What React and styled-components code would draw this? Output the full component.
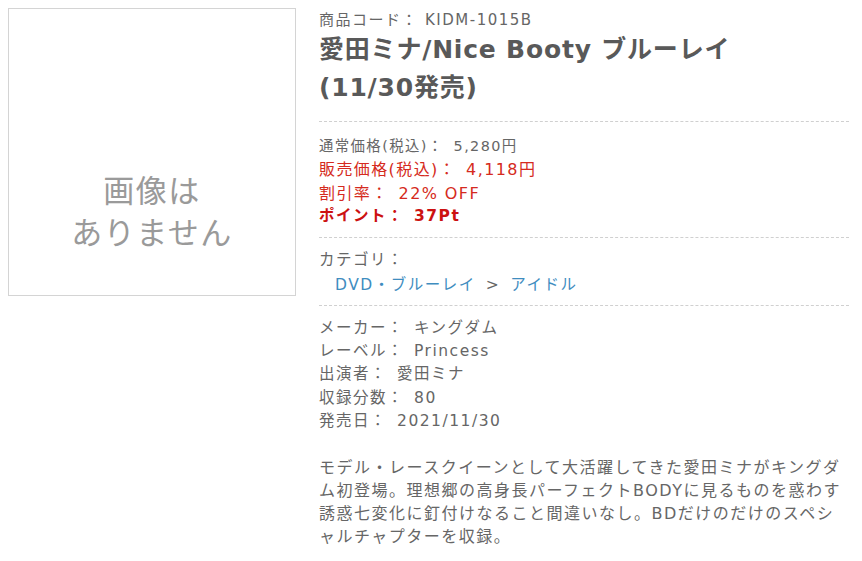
import React from 'react';
import styled, { createGlobalStyle } from 'styled-components';

const GlobalStyle = createGlobalStyle`
  body {
    margin: 8px;
    background: #fff;
    font-family: 'DejaVu Sans', 'Noto Sans CJK JP', sans-serif;
    color: #666;
  }
`;

const specs = [
  ['メーカー', 'キングダム'],
  ['レーベル', 'Princess'],
  ['出演者', '愛田ミナ'],
  ['収録分数', '80'],
  ['発売日', '2021/11/30'],
];

function App() {
  return (
    <>
      <GlobalStyle />
      <Product>
        <NoImage>
          画像は
          <br />
          ありません
        </NoImage>
        <Detail>
          <Code>
            <Label gap="7px">商品コード：</Label>KIDM-1015B
          </Code>
          <Title>
            愛田ミナ/Nice Booty ブルーレイ <NoWrap>(11/30発売)</NoWrap>
          </Title>
          <Section pad="13px 0 9px">
            <PriceLine>
              <Label>通常価格(税込)：</Label>5,280円
            </PriceLine>
            <PriceLine sale>
              <Label>販売価格(税込)：</Label>4,118円
            </PriceLine>
            <PriceLine sale>
              <Label>割引率：</Label>22% OFF
            </PriceLine>
            <PointLine>
              <Label>ポイント：</Label>37Pt
            </PointLine>
          </Section>
          <Section pad="11px 0 7px">
            <InfoLine>カテゴリ：</InfoLine>
            <CategoryPath>
              <CategoryLink href="#">
                DVD<Kana>・</Kana>ブルーレイ
              </CategoryLink>
              <Separator>&gt;</Separator>
              <CategoryLink href="#">アイドル</CategoryLink>
            </CategoryPath>
          </Section>
          <Section pad="11px 0 0">
            {specs.map(([label, value]) => (
              <InfoLine key={label}>
                <Label>{label}：</Label>
                {value}
              </InfoLine>
            ))}
          </Section>
          <Description>
            モデル<Kana>・</Kana>レースクイーンとして大活躍してきた愛田ミナがキングダ
            <br />
            ム初登場。理想郷の高身長パーフェクトBODYに見るものを惑わす
            <br />
            誘惑七変化に釘付けなること間違いなし。BDだけのだけのスペシ
            <br />
            ャルチャプターを収録。
          </Description>
        </Detail>
      </Product>
    </>
  );
}

export default App;

const Product = styled.div`
  display: flex;
  align-items: flex-start;
  gap: 23px;
`;

const NoImage = styled.div`
  flex-shrink: 0;
  box-sizing: border-box;
  width: 288px;
  height: 288px;
  padding-top: 161px;
  border: 1px solid #d4d4d4;
  color: #9a9a9a;
  font-size: 31px;
  line-height: 42px;
  text-align: center;
  letter-spacing: 1.5px;
`;

const Detail = styled.div`
  width: 530px;
`;

const Label = styled.span`
  margin-right: ${props => props.gap || '10px'};
`;

const Kana = styled.span`
  font-family: 'Noto Sans CJK JP', sans-serif;
`;

const NoWrap = styled.span`
  white-space: nowrap;
`;

const Code = styled.div`
  font-size: 15px;
  line-height: 22px;
  letter-spacing: 1.5px;
  margin-top: 1px;
`;

const Title = styled.h1`
  margin: 0;
  padding-bottom: 14px;
  color: #595959;
  font-size: 25px;
  line-height: 38px;
  font-weight: bold;
  letter-spacing: 0.8px;
`;

const Section = styled.div`
  border-top: 1px dashed #d0d0d0;
  padding: ${props => props.pad};
`;

const PriceLine = styled.div`
  color: ${props => (props.sale ? '#d52a20' : '#666')};
  font-size: ${props => (props.sale ? '16px' : '14.4px')};
  line-height: 23.3px;
  letter-spacing: 1.4px;
`;

const PointLine = styled.div`
  color: #cc1111;
  font-size: 15.5px;
  font-weight: bold;
  line-height: 23.3px;
  letter-spacing: 1.5px;
`;

const InfoLine = styled.div`
  font-size: 15.5px;
  line-height: 23.3px;
  letter-spacing: 1.5px;
`;

const CategoryPath = styled.div`
  padding-left: 16px;
  font-size: 15.5px;
  line-height: 23.3px;
  letter-spacing: 1.5px;
`;

const CategoryLink = styled.a`
  color: #3f8dbf;
  text-decoration: none;
`;

const Separator = styled.span`
  margin: 0 10px;
  color: #666;
`;

const Description = styled.p`
  margin: 22px 0 0;
  font-size: 16px;
  line-height: 23px;
  letter-spacing: 1.5px;
  white-space: nowrap;
`;
